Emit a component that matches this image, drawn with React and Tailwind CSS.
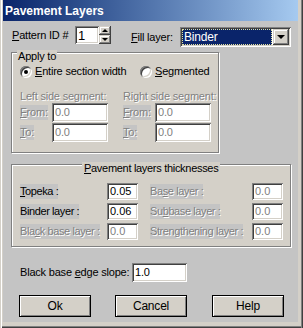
import React from "react";

const sunken =
  "shadow-[inset_1px_1px_0_#808080,inset_-1px_-1px_0_#ffffff,inset_2px_2px_0_#404040,inset_-2px_-2px_0_#d4d0c8]";
const raised =
  "shadow-[inset_-1px_-1px_0_#404040,inset_1px_1px_0_#d4d0c8,inset_-2px_-2px_0_#808080,inset_2px_2px_0_#ffffff]";
const dis = "text-[#808080] [text-shadow:1px_1px_0_#ffffff]";

function Field({ value, w, h, disabled, className = "" }) {
  return (
    <div
      className={`bg-white ${sunken} flex items-center pl-[3px] leading-none shrink-0 ${
        disabled ? "text-[#808080]" : "text-black"
      } ${className}`}
      style={{ width: w, height: h }}
    >
      {value}
    </div>
  );
}

function Radio({ checked }) {
  return (
    <div className={`w-[12px] h-[12px] rounded-full bg-white ${sunken} flex items-center justify-center shrink-0`}>
      {checked && <div className="w-[4px] h-[4px] rounded-full bg-black" />}
    </div>
  );
}

function Label({ children, disabled, w, className = "" }) {
  return (
    <div className="shrink-0" style={{ width: w }}>
      <span className={`inline-block bg-[#c4c4c4] leading-[15px] ${disabled ? dis : ""} ${className}`}>
        {children}
      </span>
    </div>
  );
}

function Btn({ children, className = "" }) {
  return (
    <div
      className={`w-[72px] h-[22px] shrink-0 border border-black bg-[#d4d0c8] shadow-[inset_1px_1px_0_#ffffff,inset_-1px_-1px_0_#808080] flex items-center justify-center text-[12px] ${className}`}
    >
      {children}
    </div>
  );
}

export default function App() {
  return (
    <div className="w-[303px] h-[328px] overflow-hidden bg-[#d4d0c8] flex flex-col pl-[3px] pr-[5px] pb-[6px] shadow-[inset_1px_0_0_#d4d0c8,inset_2px_0_0_#ffffff,inset_-1px_0_0_#404040,inset_-2px_0_0_#808080,inset_0_-1px_0_#404040,inset_0_-2px_0_#808080] font-['Liberation_Sans',sans-serif] text-[11px] tracking-[-0.2px] whitespace-nowrap text-black">
      {/* title bar */}
      <div className="h-[21px] shrink-0 bg-gradient-to-r from-[#0a246a] to-[#a6caf0] flex items-center pl-[2px]">
        <span className="font-bold text-[12px] tracking-normal text-white leading-none">Pavement Layers</span>
      </div>

      {/* body */}
      <div className="flex-1 bg-[#c4c4c4] flex flex-col">
        {/* row 1 */}
        <div className="mt-[5px] flex items-start pl-[9px]">
          <div className="w-[63px] leading-[18px] shrink-0">
            <u>P</u>attern ID #
          </div>
          <Field value="1" w={24} h={18} className="text-[13px]" />
          <div className="w-[12px] h-[18px] flex flex-col shrink-0">
            <div className={`h-[9px] bg-[#d4d0c8] ${raised} flex items-center justify-center`}>
              <div className="w-0 h-0 border-l-[3px] border-r-[3px] border-b-[3px] border-l-transparent border-r-transparent border-b-black" />
            </div>
            <div className={`h-[9px] bg-[#d4d0c8] ${raised} flex items-center justify-center`}>
              <div className="w-0 h-0 border-l-[3px] border-r-[3px] border-t-[3px] border-l-transparent border-r-transparent border-t-black" />
            </div>
          </div>
          <div className="ml-[20px] w-[49px] leading-[20px] mt-[1px] shrink-0">
            <u>F</u>ill layer:
          </div>
          <div className={`mt-[1px] w-[111px] h-[20px] shrink-0 bg-white ${sunken} flex items-center p-[2px]`}>
            <div className="flex-1 h-full bg-[#0a246a] outline-1 outline-dotted outline-[#e0e0a0] -outline-offset-1 text-white text-[12px] flex items-center pl-[2px]">
              Binder
            </div>
            <div className={`w-[16px] h-full bg-[#d4d0c8] ${raised} flex items-center justify-center ml-[1px]`}>
              <div className="w-0 h-0 border-l-[4px] border-r-[4px] border-t-[4px] border-l-transparent border-r-transparent border-t-black" />
            </div>
          </div>
        </div>

        {/* Apply to group */}
        <div className="mt-[5px] ml-[8px] w-[208px] h-[101px] shrink-0 relative border border-[#808080] bg-[#d4d0c8] shadow-[inset_1px_1px_0_#ffffff,1px_1px_0_#ffffff] flex flex-col">
          <span className="absolute left-[5px] top-[-3px] px-[1px] leading-[13px] bg-[#d4d0c8]">Apply to</span>
          <div className="mt-[12px] pl-[8px] flex items-center h-[13px]">
            <div className="w-[120px] flex items-center shrink-0">
              <Radio checked />
              <span className="ml-[3px] leading-[13px]">
                <u>E</u>ntire section width
              </span>
            </div>
            <Radio />
            <span className="ml-[3px] leading-[13px]">
              <u>S</u>egmented
            </span>
          </div>
          <div className="mt-[12px] pl-[8px] flex h-[13px] leading-[13px]">
            <div className={`w-[103px] shrink-0 ${dis}`}>Left side segment:</div>
            <div className={dis}>Right side segment:</div>
          </div>
          <div className="pl-[8px] flex flex-col gap-[1px]">
            <div className="flex items-center">
              <Label w={32} disabled>
                <u>F</u>rom:
              </Label>
              <Field value="0.0" w={56} h={19} disabled />
              <div className="w-[15px] shrink-0" />
              <Label w={32} disabled>
                <u>F</u>rom:
              </Label>
              <Field value="0.0" w={56} h={19} disabled />
            </div>
            <div className="flex items-center">
              <Label w={32} disabled>
                <u>T</u>o:
              </Label>
              <Field value="0.0" w={56} h={19} disabled />
              <div className="w-[15px] shrink-0" />
              <Label w={32} disabled>
                <u>T</u>o:
              </Label>
              <Field value="0.0" w={56} h={19} disabled />
            </div>
          </div>
        </div>

        {/* Pavement layers thicknesses group */}
        <div className="mt-[11px] ml-[8px] w-[280px] h-[83px] shrink-0 relative border border-[#808080] bg-[#d4d0c8] shadow-[inset_1px_1px_0_#ffffff,1px_1px_0_#ffffff] flex flex-col">
          <span className="absolute left-[70px] top-[-3px] px-[2px] leading-[13px] bg-[#d4d0c8] tracking-[-0.3px]">
            <u>P</u>avement layers thicknesses
          </span>
          <div className="mt-[18px] pl-[8px] flex flex-col gap-[3px] tracking-[-0.4px]">
            <div className="flex items-center">
              <Label w={87}>
                <u>T</u>opeka :
              </Label>
              <Field value="0.05" w={31} h={17} className="tracking-normal" />
              <div className="w-[12px] shrink-0" />
              <Label w={102} disabled>
                Ba<u>s</u>e layer :
              </Label>
              <Field value="0.0" w={31} h={17} disabled className="tracking-normal" />
            </div>
            <div className="flex items-center">
              <Label w={87}>Binder layer :</Label>
              <Field value="0.06" w={31} h={17} className="tracking-normal" />
              <div className="w-[12px] shrink-0" />
              <Label w={102} disabled>
                Su<u>b</u>base layer :
              </Label>
              <Field value="0.0" w={31} h={17} disabled className="tracking-normal" />
            </div>
            <div className="flex items-center">
              <Label w={87} disabled>
                Bla<u>c</u>k base layer :
              </Label>
              <Field value="0.0" w={31} h={17} disabled className="tracking-normal" />
              <div className="w-[12px] shrink-0" />
              <Label w={102} disabled>
                Strengthening layer :
              </Label>
              <Field value="0.0" w={31} h={17} disabled className="tracking-normal" />
            </div>
          </div>
        </div>

        {/* slope */}
        <div className="mt-[16px] ml-[17px] flex items-center">
          <div className="w-[112px] shrink-0">
            Black base <u>e</u>dge slope:
          </div>
          <Field value="1.0" w={55} h={19} />
        </div>

        {/* buttons */}
        <div className="mt-[13px] ml-[16px] flex">
          <Btn>Ok</Btn>
          <Btn className="ml-[24px]">Cancel</Btn>
          <Btn className="ml-[25px]">Help</Btn>
        </div>
      </div>
    </div>
  );
}
